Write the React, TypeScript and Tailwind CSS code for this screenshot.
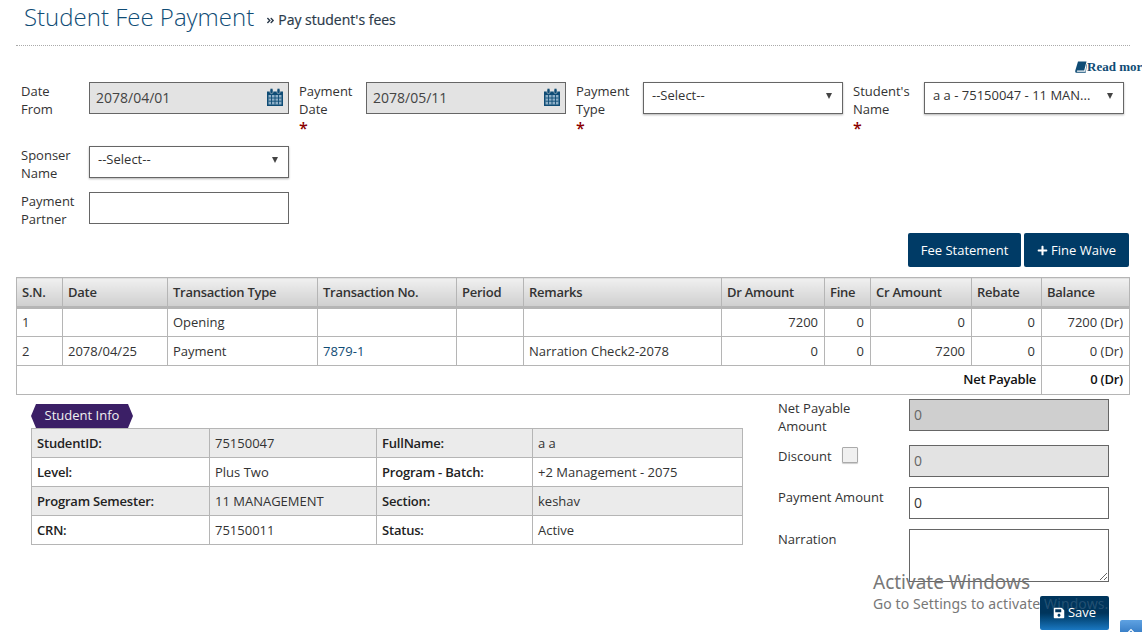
import React from "react";
import { FaPlus, FaSave, FaAngleDoubleRight, FaChevronUp } from "react-icons/fa";

const Star = () => <div className="text-[#8b0000] text-[16px] leading-[20px] h-[14px] font-semibold">*</div>;

function Label({ lines, star, className = "" }: { lines: string[]; star?: boolean; className?: string }) {
  return (
    <div className={"text-[13px] leading-[18px] text-[#333] " + className}>
      {lines.map((l) => <div key={l}>{l}</div>)}
      {star && <Star />}
    </div>
  );
}

function CalendarIcon() {
  return (
    <svg width="16" height="18" viewBox="0 0 16 18" className="shrink-0 mb-[2px]">
      <path d="M0 3.5h16V18H0z" fill="#0f4c75" />
      <rect x="3" y="0.5" width="3" height="5" rx="1.2" fill="#0f4c75" stroke="#e3e3e3" strokeWidth="0.5" />
      <rect x="10" y="0.5" width="3" height="5" rx="1.2" fill="#0f4c75" stroke="#e3e3e3" strokeWidth="0.5" />
      <path d="M1.5 7h13v9.5h-13z" fill="#8fb0c8" />
      <path d="M4.5 7v9.5M8 7v9.5M11.5 7v9.5M1.5 10h13M1.5 13.2h13" stroke="#0f4c75" strokeWidth="0.9" />
    </svg>
  );
}

function BookIcon() {
  return (
    <svg width="12" height="12" viewBox="0 0 12 12" className="shrink-0">
      <path d="M3 0.5h8.5L9.2 9.5H2.4c-.8 0-.9 1.2 0 1.2h8L11.5 3.2 12 3.6 10.7 11.8H1.8C.4 11.8 0 10.6.3 9.4z" fill="#0f4c75" />
    </svg>
  );
}

function DateBox({ value }: { value: string }) {
  return (
    <div className="w-[200px] h-[32px] border border-[#666] bg-[#e3e3e3] flex items-center justify-between pl-[6px] pr-[5px] pb-[1px] text-[14px] text-[#444]">
      <span>{value}</span>
      <CalendarIcon />
    </div>
  );
}

function SelectBox({ value }: { value: string }) {
  return (
    <div className="w-[200px] h-[32px] border border-[#666] bg-white shadow-[0_1px_2px_rgba(0,0,0,0.3)] flex items-start justify-between pl-[8px] pr-[10px] pt-[3px] text-[13px] text-[#333]">
      <span className="truncate">{value}</span>
      <span className="mt-[7px] w-0 h-0 border-l-[3.5px] border-r-[3.5px] border-t-[6px] border-l-transparent border-r-transparent border-t-[#444]" />
    </div>
  );
}

const head = ["S.N.", "Date", "Transaction Type", "Transaction No.", "Period", "Remarks", "Dr Amount", "Fine", "Cr Amount", "Rebate", "Balance"];
const widths = [46, 105, 150, 139, 67, 198, 103, 46, 101, 70, 88];

const cellBase = "border border-[#b5b5b5] py-0 h-[29px] text-[13px]";
const cell = cellBase + " px-[5px] text-[#333]";
const num = cellBase + " pl-[5px] pr-[6px] text-right text-[#333]";
const numBold = cellBase + " pl-[5px] text-right font-semibold text-[#111] tracking-[-0.25px]";

const info = [
  ["StudentID:", "75150047", "FullName:", "a a"],
  ["Level:", "Plus Two", "Program - Batch:", "+2 Management - 2075"],
  ["Program Semester:", "11 MANAGEMENT", "Section:", "keshav"],
  ["CRN:", "75150011", "Status:", "Active"],
];

export default function App() {
  return (
    <div className="relative w-[1142px] h-[632px] overflow-hidden bg-white text-[13px] text-[#333] font-['Open_Sans',sans-serif]">
      <div className="mx-[16px] w-[1114px] h-[46px] border-b border-dotted border-[#aaa] pl-[8px] flex items-start">
        <h1 className="text-[24px] leading-[34px] text-[#0f4c75] font-light">Student Fee Payment</h1>
        <div className="ml-[12px] mt-[10px] flex items-center text-[14px] leading-[20px] text-[#2b3a4a] [-webkit-text-stroke:0.2px_#2b3a4a]">
          <FaAngleDoubleRight className="text-[9px] mr-[3px]" />
          Pay student's fees
        </div>
      </div>

      <div className="h-[36px] flex justify-end items-start pt-[14px] overflow-hidden">
        <div className="flex items-center w-[67px] shrink-0 text-[13px] leading-[14px] font-bold text-[#0f4c75] whitespace-nowrap font-['Liberation_Serif',serif]">
          <BookIcon />
          <span>Read more</span>
        </div>
      </div>

      <div className="pl-[21px] flex flex-col">
        <div className="flex h-[64px]">
          <Label lines={["Date", "From"]} className="w-[68px]" />
          <DateBox value="2078/04/01" />
          <Label lines={["Payment", "Date"]} star className="w-[67px] ml-[10px]" />
          <DateBox value="2078/05/11" />
          <Label lines={["Payment", "Type"]} star className="w-[67px] ml-[10px]" />
          <SelectBox value="--Select--" />
          <Label lines={["Student's", "Name"]} star className="w-[71px] ml-[10px]" />
          <SelectBox value="a a - 75150047 - 11 MAN..." />
        </div>
        <div className="flex h-[46px]">
          <Label lines={["Sponser", "Name"]} className="w-[68px]" />
          <SelectBox value="--Select--" />
        </div>
        <div className="flex h-[41px]">
          <Label lines={["Payment", "Partner"]} className="w-[68px]" />
          <div className="w-[200px] h-[32px] border border-[#666] bg-white" />
        </div>
      </div>

      <div className="w-[1129px] flex justify-end gap-[3px]">
        <button className="w-[113px] h-[34px] pt-[1px] bg-[#003b66] text-white text-[13px] rounded-[2px]">Fee Statement</button>
        <button className="w-[105px] h-[34px] pt-[1px] bg-[#003b66] text-white text-[13px] rounded-[2px] flex items-center justify-center gap-[3px]">
          <FaPlus className="text-[11px]" />
          Fine Waive
        </button>
      </div>

      <table className="ml-[16px] mt-[10px] w-[1113px] table-fixed border-collapse">
        <colgroup>{widths.map((w, i) => <col key={i} style={{ width: w }} />)}</colgroup>
        <thead>
          <tr>
            {head.map((h) => (
              <th key={h} className="border border-[#b5b5b5] border-b-[3px] h-[30px] pl-[5px] pr-0 pt-[1px] text-left text-[13px] font-semibold tracking-[-0.25px] text-[#333] bg-gradient-to-b from-[#f0f0f0] to-[#cfcfcf]">{h}</th>
            ))}
          </tr>
        </thead>
        <tbody>
          <tr>
            <td className={cell}>1</td><td className={cell}></td><td className={cell}>Opening</td><td className={cell}></td><td className={cell}></td><td className={cell}></td>
            <td className={num}>7200</td><td className={num}>0</td><td className={num}>0</td><td className={num}>0</td><td className={num}>7200 (Dr)</td>
          </tr>
          <tr className="[&>td]:pt-[1px]">
            <td className={cell}>2</td><td className={cell}>2078/04/25</td><td className={cell}>Payment</td>
            <td className={cellBase + " px-[5px] text-[#0f4c75]"}>7879-1</td>
            <td className={cell}></td><td className={cell}>Narration Check2-2078</td>
            <td className={num}>0</td><td className={num}>0</td><td className={num}>7200</td><td className={num}>0</td><td className={num}>0 (Dr)</td>
          </tr>
          <tr>
            <td colSpan={10} className={numBold + " pr-[5px]"}>Net Payable</td>
            <td className={numBold + " pr-[6px]"}>0 (Dr)</td>
          </tr>
        </tbody>
      </table>

      <div className="flex">
        <div className="ml-[31px] w-[712px] pt-[9px]">
          <div
            className="w-[102px] h-[24px] bg-[#3b1f66] text-[#f0f0f0] text-[13px] leading-[22px] text-center"
            style={{ clipPath: "polygon(5px 0, 97px 0, 100% 50%, 97px 100%, 5px 100%, 0 50%)" }}
          >
            Student Info
          </div>
          <table className="w-[712px] table-fixed border-collapse">
            <colgroup>
              <col style={{ width: 178 }} /><col style={{ width: 167 }} /><col style={{ width: 156 }} /><col style={{ width: 210 }} />
            </colgroup>
            <tbody>
              {info.map((r, i) => (
                <tr key={r[0]} className={(i % 2 === 0 ? "bg-[#ebebeb]" : "bg-white") + " [&>td]:pt-[1px]"}>
                  <td className={cellBase + " px-[5px] font-semibold tracking-[-0.2px] text-[#222]"}>{r[0]}</td>
                  <td className={cell}>{r[1]}</td>
                  <td className={cellBase + " px-[5px] font-semibold tracking-[-0.2px] text-[#222]"}>{r[2]}</td>
                  <td className={cell}>{r[3]}</td>
                </tr>
              ))}
            </tbody>
          </table>
        </div>

        <div className="ml-[35px] w-[331px] pt-[4px] flex flex-col">
          <div className="flex h-[46px]">
            <Label lines={["Net Payable", "Amount"]} className="w-[131px]" />
            <div className="w-[200px] h-[32px] border border-[#666] bg-[#cfcfcf] pl-[4px] pb-[1px] flex items-center text-[14px] text-[#666]">0</div>
          </div>
          <div className="flex h-[42px]">
            <div className="w-[131px] flex items-start pt-[2px]">
              <span className="leading-[18px]">Discount</span>
              <span className="ml-[10px] mt-[0px] w-[16px] h-[16px] border border-[#aaa] rounded-[1px] bg-[#f0f0f0] shadow-[0_1px_1px_rgba(0,0,0,0.2)]" />
            </div>
            <div className="w-[200px] h-[32px] border border-[#666] bg-[#e3e3e3] pl-[4px] pb-[1px] flex items-center text-[14px] text-[#666]">0</div>
          </div>
          <div className="flex h-[42px]">
            <div className="w-[131px] leading-[18px] pt-[1px]">Payment Amount</div>
            <div className="w-[200px] h-[32px] border border-[#666] bg-white pl-[4px] pb-[1px] flex items-center text-[14px] text-[#333]">0</div>
          </div>
          <div className="flex h-[67px]">
            <div className="w-[131px] leading-[18px] pt-[1px]">Narration</div>
            <textarea className="w-[200px] h-[53px] border border-[#666] bg-white outline-none" defaultValue="" />
          </div>
          <div className="flex justify-end">
            <button className="w-[69px] h-[34px] rounded-[2px] text-white text-[13px] flex items-center justify-center gap-[3px] bg-gradient-to-b from-[#00355c] via-[#00355c] to-[#1a78c2]">
              <FaSave className="text-[12px]" />
              Save
            </button>
          </div>
        </div>
      </div>

      <div className="absolute left-[873px] top-[570px] text-[#777] pointer-events-none font-['Noto_Sans',sans-serif]">
        <div className="text-[19px] leading-[24px]">Activate Windows</div>
        <div className="text-[14px] leading-[20px] tracking-[0.1px] whitespace-nowrap">
          Go to Settings to activate <span className="text-white/15">Windows.</span>
        </div>
      </div>
      <div className="absolute left-[1120px] top-[620px] w-[22px] h-[12px] bg-gradient-to-b from-[#5fa2e2] to-[#3a80c8] rounded-tl-[2px] flex justify-center items-start text-white">
        <FaChevronUp className="text-[8px] mt-[7px]" />
      </div>
    </div>
  );
}
